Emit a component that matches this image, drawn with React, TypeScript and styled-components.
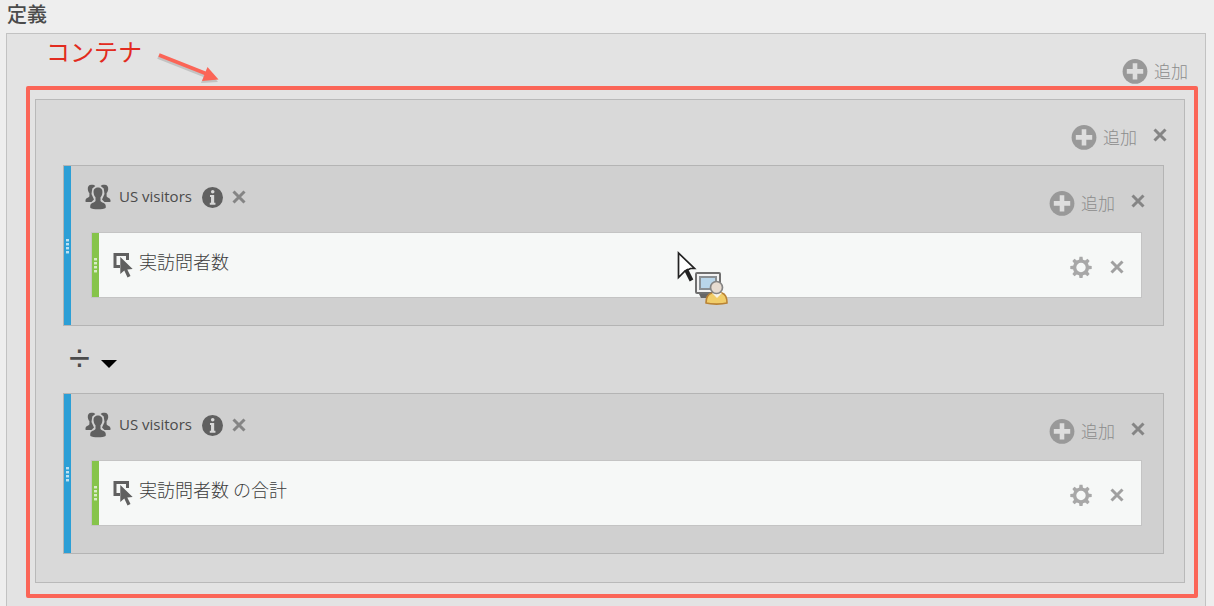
import React from 'react';
import styled, { createGlobalStyle } from 'styled-components';

const GlobalStyle = createGlobalStyle`
  * { box-sizing: border-box; }
  body {
    margin: 0;
    background: #eeeeee;
    color: #4b4b4b;
    font-family: "Noto Sans", "Noto Sans CJK JP", sans-serif;
    overflow: hidden;
  }
  button { border: 0; padding: 0; background: none; font: inherit; color: inherit; cursor: pointer; }
  svg { display: block; flex: none; }
`;

const Page = styled.main`
  padding: 0 8px 0 6px;
`;

const Title = styled.h1`
  height: 33px;
  margin: 0;
  padding-left: 1px;
  font: 500 20px/28px "Noto Sans CJK JP", sans-serif;
  color: #4b4b4b;
`;

const Panel = styled.section`
  min-height: calc(100vh - 33px);
  padding: 0 7px 8px 19px;
  border: 1px solid #c2c2c2;
  border-bottom: 0;
  background: #e3e3e3;
`;

const PanelHeader = styled.header`
  display: flex;
  align-items: flex-start;
  height: 52px;
  padding-right: 10px;
`;

const Annotation = styled.span`
  padding-left: 20px;
  font: 400 24px/34px "Noto Sans CJK JP", sans-serif;
  color: #e22b20;
`;

const Arrow = styled.svg`
  margin: 16px 0 0 15px;
`;

const Highlight = styled.div`
  padding: 9px 9px 11px 5px;
  border: 4px solid #fb6557;
  border-radius: 2px;
`;

const Container = styled.section`
  padding: 0 20px 28px 27px;
  border: 1px solid #b9b9b9;
  background: #d9d9d9;
`;

const Actions = styled.div`
  display: flex;
  align-items: flex-start;
  gap: 16px;
  margin-left: auto;
  padding-top: 24px;
`;

const ContainerHeader = styled.header`
  display: flex;
  height: 65px;
  margin-right: -3px;
`;

const AddButton = styled.button`
  display: flex;
  align-items: center;
  gap: 6px;
  height: 26px;
  font: 300 17px/26px "Noto Sans CJK JP", sans-serif;
  color: #8c8c8c;
`;

const IconButton = styled.button<{ $tone?: string }>`
  display: flex;
  align-items: center;
  color: ${(p) => p.$tone ?? '#858585'};
`;

const CloseButton = styled(IconButton)`
  height: 22px;
`;

const Block = styled.article`
  display: flex;
  border: 1px solid #b4b4b4;
  background: #d0d0d0;
`;

const Handle = styled.div<{ $color: string }>`
  display: flex;
  align-items: center;
  justify-content: center;
  flex: none;
  width: 7px;
  background: ${(p) => p.$color};
`;

const BlockBody = styled.div`
  flex: 1;
  min-width: 0;
  padding: 0 21px 27px 20px;
`;

const BlockHeader = styled.header`
  display: flex;
  align-items: flex-start;
  height: 66px;
  margin: 0 -3px 0 -6px;
`;

const Segment = styled.div`
  display: flex;
  align-items: center;
  height: 62px;
`;

const SegmentName = styled.span`
  margin: 0 10px 0 8px;
  padding-bottom: 2px;
  font: 400 15px/24px "Open Sans", sans-serif;
`;

const SegmentTools = styled.div`
  display: flex;
  align-items: center;
  gap: 9px;
`;

const Card = styled.div`
  position: relative;
  display: flex;
  height: 66px;
  border: 1px solid #c4c4c4;
  background: #f6f8f7;
`;

const Metric = styled.div`
  display: flex;
  align-items: center;
  flex: 1;
  gap: 6px;
  padding: 0 17px 0 14px;
`;

const MetricName = styled.span`
  padding-bottom: 8px;
  font: 300 18px/26px "Noto Sans CJK JP", sans-serif;
  color: #3c3c3c;
`;

const MetricTools = styled.div`
  display: flex;
  align-items: center;
  gap: 18px;
  margin-left: auto;
  padding-top: 4px;
`;

const Operator = styled.label`
  display: flex;
  align-items: center;
  gap: 8px;
  height: 67px;
  padding-left: 6px;
`;

const OperatorSelect = styled.select`
  appearance: none;
  width: 24px;
  height: 44px;
  margin-bottom: 4px;
  padding: 0;
  border: 0;
  background: none;
  font: 400 38px/40px "Liberation Sans", sans-serif;
  color: #4b4b4b;
`;

const Caret = styled.svg`
  margin-top: 9px;
`;

const DragCursor = styled.svg`
  position: absolute;
  top: 18px;
  left: 584px;
  pointer-events: none;
`;

const CloseIcon = () => (
  <svg width="14" height="14" viewBox="0 0 14 14" fill="none" stroke="currentColor" strokeWidth="3" aria-hidden="true">
    <path d="M1.5 1.5 12.5 12.5M12.5 1.5 1.5 12.5" />
  </svg>
);

const PlusIcon = () => (
  <svg width="26" height="26" viewBox="0 0 26 26" aria-hidden="true">
    <circle cx="13" cy="13.4" r="12.4" fill="#999999" />
    <path d="M10.700 5.200h4.600v5.900h5.900v4.600h-5.900v5.900h-4.600v-5.900H4.800v-4.600h5.900z" fill="#dedede" />
  </svg>
);

const InfoIcon = () => (
  <svg width="21" height="21" viewBox="0 0 20 20" aria-hidden="true">
    <circle cx="10" cy="10" r="10" fill="#606060" />
    <circle cx="10.2" cy="4.6" r="1.7" fill="#d8d8d8" />
    <path d="M7.600 7.700h4v7.400h1.200V17H7.400v-1.900h1.200V9.500h-1z" fill="#d8d8d8" />
  </svg>
);

const PeopleIcon = () => (
  <svg width="26" height="26" viewBox="0 0 26 26" aria-hidden="true">
    <g fill="#606060">
      <path d="M7 .8C4.200.4 2.500 2.400 2.800 5.200c.2 1.900.8 3 1.600 3.900v3.200C3.800 13.900.8 14 .5 16.200c-.1.800 0 1.400.2 1.800h5.800l2.500-2.600L6.500 10 7.300 4.600l3-2.600C9.600 1.200 8.500.9 7 .8z" />
      <path d="M19 .8c2.800-.4 4.500 1.600 4.200 4.400-.2 1.900-.8 3-1.600 3.900v3.200c.6 1.600 3.600 1.700 3.900 3.900.1.800 0 1.400-.2 1.800h-5.800L17 15.400l2.500-5.400-.8-5.400-3-2.600C16.400 1.200 17.500.9 19 .8z" />
      <path d="M13 3.600c-3.300 0-4.700 2.300-4.400 5.100.2 2.100 1 3.500 1.900 4.600v3.800c-.9 1.600-4.700 1.800-5.200 4.300-.2 1.200-.1 2 .1 2.600 2 1.700 13.200 1.700 15.200 0 .2-.6.300-1.400.1-2.600-.5-2.500-4.300-2.700-5.200-4.300v-3.800c.9-1.100 1.700-2.500 1.900-4.600.3-2.800-1.100-5.100-4.400-5.100z" />
    </g>
  </svg>
);

const MetricIcon = () => (
  <svg width="20" height="26" viewBox="0 0 20 26" aria-hidden="true">
    <path d="M7 14.500H2V2.500h12.500V8" fill="none" stroke="#606060" strokeWidth="3" />
    <path d="M7.300 5v17l4-3.600 3.200 7 3-1.400-3.200-6.600 5.400-.4z" fill="#606060" />
  </svg>
);

const GearIcon = () => (
  <svg width="22" height="22" viewBox="0 0 22 22" aria-hidden="true">
    <circle cx="11" cy="11.500" r="6.400" fill="none" stroke="currentColor" strokeWidth="3.400" />
    {[0, 45, 90, 135, 180, 225, 270, 315].map((angle) => (
      <path key={angle} d="M8.900 4.900 9.500.8h3l.6 4.100z" fill="currentColor" transform={`rotate(${angle} 11 11.500)`} />
    ))}
  </svg>
);

const Grip = () => (
  <svg width="5" height="16" viewBox="0 0 5 16" fill="#ffffff" aria-hidden="true">
    {[0, 4, 8, 12].map((y) => (
      <g key={y}>
        <path d={`M1 ${y + 1}h3v3H1z`} fillOpacity="0.3" />
        <path d={`M1 ${y + 1}h3v2H1z`} fillOpacity="0.55" />
      </g>
    ))}
  </svg>
);

const Pointer = () => (
  <DragCursor width="52" height="56" viewBox="0 0 52 56" aria-hidden="true">
    <path d="M2.500 2v24.500l6-6 6-3h4z" fill="#ffffff" stroke="#222222" strokeWidth="1.700" />
    <path d="M10 18.500l5.500 11" stroke="#222222" strokeWidth="4" />
    <path d="M23 43h10v4h-8z" fill="#666666" />
    <rect x="20" y="22" width="24" height="20" rx="1" fill="#f2f2f2" stroke="#707070" strokeWidth="2" />
    <rect x="24" y="26" width="16" height="12" fill="#b9d6ea" stroke="#8a9094" strokeWidth="2" />
    <path d="M30 52c0-5 2-9 6-10h10c3 1 5 5 5 10-5 1.500-16 1.500-21 0z" fill="#f1cd69" stroke="#b98335" strokeWidth="1.600" />
    <path d="M36 42h10l-5 5z" fill="#f7f2e6" />
    <circle cx="40.500" cy="36.500" r="6" fill="#e7dcd1" stroke="#858585" strokeWidth="1.700" />
  </DragCursor>
);

const Add = () => (
  <AddButton type="button">
    <PlusIcon />
    追加
  </AddButton>
);

const SegmentBlock = ({ metric, dragging }: { metric: string; dragging?: boolean }) => (
  <Block>
    <Handle $color="#2c9fd6"><Grip /></Handle>
    <BlockBody>
      <BlockHeader>
        <Segment>
          <PeopleIcon />
          <SegmentName>US visitors</SegmentName>
          <SegmentTools>
            <IconButton type="button" aria-label="情報"><InfoIcon /></IconButton>
            <IconButton type="button" aria-label="セグメントを削除"><CloseIcon /></IconButton>
          </SegmentTools>
        </Segment>
        <Actions>
          <Add />
          <CloseButton type="button" aria-label="閉じる"><CloseIcon /></CloseButton>
        </Actions>
      </BlockHeader>
      <Card>
        <Handle $color="#86c44b"><Grip /></Handle>
        <Metric>
          <MetricIcon />
          <MetricName>{metric}</MetricName>
          <MetricTools>
            <IconButton type="button" $tone="#a8a8a8" aria-label="設定"><GearIcon /></IconButton>
            <IconButton type="button" $tone="#a0a0a0" aria-label="指標を削除"><CloseIcon /></IconButton>
          </MetricTools>
        </Metric>
        {dragging && <Pointer />}
      </Card>
    </BlockBody>
  </Block>
);

export default function App() {
  return (
    <>
      <GlobalStyle />
      <Page>
        <Title>定義</Title>
        <Panel>
          <PanelHeader>
            <Annotation>コンテナ</Annotation>
            <Arrow width="64" height="36" viewBox="0 0 64 36" aria-hidden="true">
              <g opacity="0.22" transform="translate(-1 2)">
                <path d="M2 5 50 24" stroke="#555555" strokeWidth="4" />
                <path d="M51 17l11 13-17 1z" fill="#555555" />
              </g>
              <path d="M2 5 50 24" stroke="#fb6557" strokeWidth="3.500" />
              <path d="M50.500 17l11 12.500-16.500 1.500z" fill="#fb6557" />
            </Arrow>
            <Actions><Add /></Actions>
          </PanelHeader>
          <Highlight>
            <Container>
              <ContainerHeader>
                <Actions>
                  <Add />
                  <CloseButton type="button" aria-label="コンテナを閉じる"><CloseIcon /></CloseButton>
                </Actions>
              </ContainerHeader>
              <SegmentBlock metric="実訪問者数" dragging />
              <Operator>
                <OperatorSelect aria-label="演算子" defaultValue="÷">
                  <option>÷</option>
                </OperatorSelect>
                <Caret width="16" height="8" viewBox="0 0 16 8" aria-hidden="true">
                  <path d="M0 0h16L8 8z" fill="#000000" />
                </Caret>
              </Operator>
              <SegmentBlock metric="実訪問者数 の合計" />
            </Container>
          </Highlight>
        </Panel>
      </Page>
    </>
  );
}
